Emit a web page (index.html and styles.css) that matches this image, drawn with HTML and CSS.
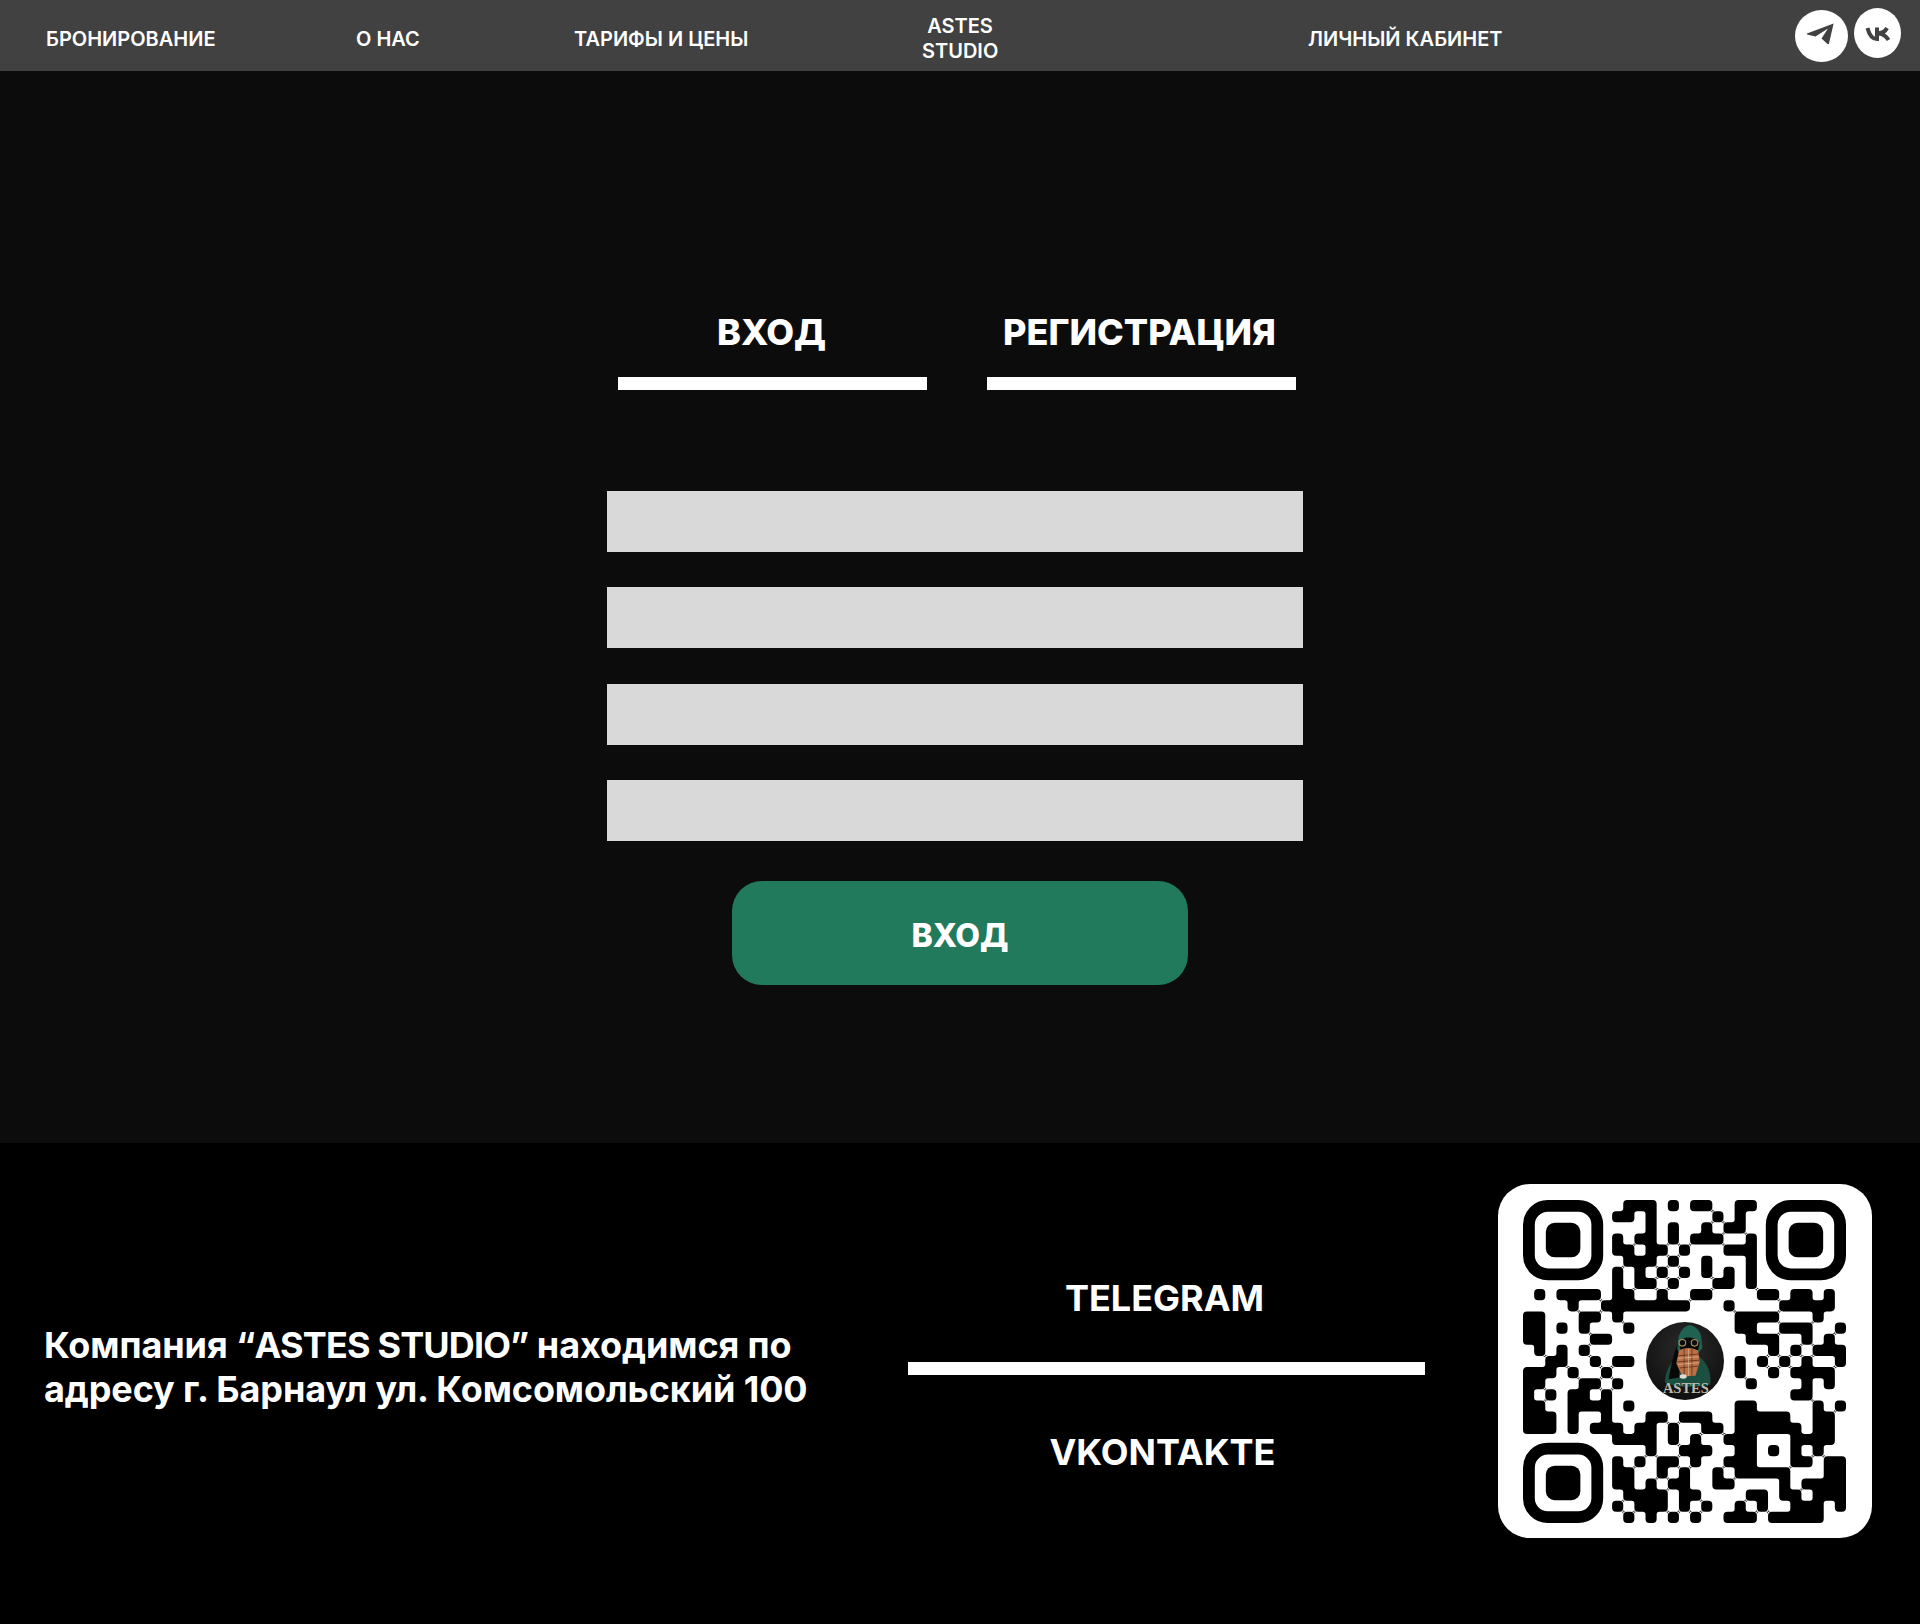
FILE: index.html
```html
<!DOCTYPE html>
<html lang="ru">
<head>
  <meta charset="UTF-8">
  <meta name="viewport" content="width=device-width, initial-scale=1.0">
  <title>ASTES STUDIO</title>
  <link rel="stylesheet" href="styles.css">
</head>
<body>
  <header class="top-bar">
    <a class="nav-link" href="#">БРОНИРОВАНИЕ</a>
    <a class="nav-link" href="#">О НАС</a>
    <a class="nav-link" href="#">ТАРИФЫ И ЦЕНЫ</a>
    <a class="nav-link nav-brand" href="#">ASTES STUDIO</a>
    <a class="nav-link" href="#">ЛИЧНЫЙ КАБИНЕТ</a>
    <div class="socials">
      <a class="social social-tg" href="#" aria-label="Telegram">
        <svg viewBox="0 0 53 52" width="53" height="52">
          <path class="icon-fill" d="M12 23.5 38.6 13.4 34 33.6c-.2.8-.9 1-1.5.5L26.5 28.5 33 18.6 20.5 26.6 13 24.8c-1.2-.3-1.2-.9-1-1.3z"/>
        </svg>
      </a>
      <a class="social social-vk" href="#" aria-label="VK">
        <svg viewBox="0 0 47 50" width="47" height="50">
          <path class="icon-line" d="M13.5 20C15 26 18 31 23 31V19.5M23 25.5C27 25.5 31 24 33 20M25 25.5C29 26 32 28 34.5 32"/>
        </svg>
      </a>
    </div>
  </header>

  <main class="auth">
    <div class="tabs">
      <a class="tab tab-login" href="#">ВХОД</a>
      <a class="tab tab-signup" href="#">РЕГИСТРАЦИЯ</a>
    </div>
    <form class="auth-form">
      <input class="field" type="text">
      <input class="field" type="text">
      <input class="field" type="password">
      <input class="field" type="password">
      <button class="submit" type="submit">ВХОД</button>
    </form>
  </main>

  <footer class="site-footer">
    <p class="address">Компания <span class="address-name">“ASTES STUDIO”</span> находимся по<br>адресу г. Барнаул ул. Комсомольский 100</p>
    <div class="contacts">
      <a class="contact-link" href="#">TELEGRAM</a>
      <div class="contact-line"></div>
      <a class="contact-link contact-vk" href="#">VKONTAKTE</a>
    </div>
    <div class="qr-card">
      <svg id="qr" class="qr-code" viewBox="0 0 29 29" width="323" height="323"></svg>
      <svg class="qr-logo" viewBox="0 0 90 90" width="78" height="78">
        <defs>
          <radialGradient id="logoBg" cx="50%" cy="35%" r="65%">
            <stop offset="0" stop-color="#2a2a2a"/>
            <stop offset="1" stop-color="#101010"/>
          </radialGradient>
        </defs>
        <circle cx="45" cy="45" r="45" fill="url(#logoBg)"/>
        <path fill="#1b4f42" d="M22 70C22 58 27 47 36 40L62 40C70 47 76 58 74 72 58 76 36 76 22 70z"/>
        <path fill="#080808" d="M37 24C31 38 29 52 26 66L38 64 41 30z"/>
        <path fill="#1f6251" d="M51 3.5C43 5 38 12 37 21L36 32 40 36 60 36 65 30 64 19C63 11 58 5 51 3.5z"/>
        <path fill="#090909" d="M38 24C42 16 56 16 62 24L60 33 40 33z"/>
        <circle cx="42" cy="24" r="3.8" fill="#0d0d0d" stroke="#a8925f" stroke-width="1.3"/>
        <circle cx="56" cy="24" r="3.8" fill="#0d0d0d" stroke="#a8925f" stroke-width="1.3"/>
        <path fill="#bb7046" d="M38 33C44 29 54 29 60 33L62 46 57 62 42 63 35 48z"/>
        <path fill="none" stroke="#6f3a20" stroke-width="1.1" d="M37 39 61 37M36 46 62 44M39 53 60 51M44 31 44 62M53 31 53 62"/>
        <path fill="none" stroke="#e3d3b6" stroke-width=".6" d="M37 42 61 40M37 49 61 47M49 31 49 62"/>
        <ellipse cx="43" cy="63" rx="4" ry="2.6" fill="#e0dad0"/>
        <text class="logo-text" x="46" y="82" textLength="53" lengthAdjust="spacingAndGlyphs">ASTES</text>
      </svg>
    </div>
  </footer>

  <script src="qr.js"></script>
</body>
</html>
```

FILE: styles.css
```css
* {
  margin: 0;
  padding: 0;
  box-sizing: border-box;
  font-family: 'Inter', 'Liberation Sans', sans-serif;
}

body {
  width: 1920px;
  min-height: 1624px;
  background-color: #000;
  color: #fff;
}

a {
  color: #fff;
  text-decoration: none;
}

/* Top bar */
.top-bar {
  height: 71px;
  padding-left: 46px;
  background-color: #414141;
  display: grid;
  grid-template-columns: 310px 218px 348px 386px 487px 106px;
  align-items: center;
}

.nav-link {
  padding-top: 7px;
  font-size: 20px;
  font-weight: 600;
  line-height: 25px;
}

.nav-brand {
  width: 76px;
  text-align: center;
}

.socials {
  display: flex;
  align-items: center;
  gap: 6px;
}

.social {
  display: block;
  background-color: #fff;
  border-radius: 50%;
  line-height: 0;
}

.social-tg {
  width: 53px;
  height: 52px;
}

.social-vk {
  width: 47px;
  height: 50px;
  margin-top: -6px;
}

.icon-fill {
  fill: #414141;
}

.icon-line {
  fill: none;
  stroke: #414141;
  stroke-width: 4;
}

/* Login / sign up */
.auth {
  height: 1072px;
  padding: 235px 0 0 607px;
  background-color: #0c0c0c;
}

.tabs {
  display: flex;
  gap: 60px;
  margin-left: 11px;
}

.tab {
  width: 309px;
  height: 84px;
  padding-top: 4px;
  border-bottom: 13px solid #fff;
  font-size: 36px;
  font-weight: 800;
  line-height: 44px;
  text-align: center;
}

.tab-login {
  padding-right: 2px;
}

.tab-signup {
  padding-right: 4px;
}

.auth-form {
  width: 696px;
  margin-top: 101px;
  display: flex;
  flex-direction: column;
  gap: 35.33px;
}

.field {
  width: 100%;
  height: 61px;
  border: none;
  background-color: #d9d9d9;
}

.submit {
  width: 456px;
  height: 104px;
  margin: 5px 0 0 125px;
  padding-top: 4px;
  border: none;
  border-radius: 30px;
  background-color: #207a5b;
  color: #fff;
  font-size: 32px;
  font-weight: 800;
}

/* Footer */
.site-footer {
  height: 481px;
  padding-left: 44px;
  background-color: #000;
  display: flex;
  align-items: flex-start;
}

.address {
  width: 800px;
  margin-top: 180px;
  font-size: 36px;
  font-weight: 700;
  line-height: 44px;
  letter-spacing: -0.1px;
}

.address-name {
  letter-spacing: -0.85px;
}

.contacts {
  width: 517px;
  margin: 133px 0 0 64px;
  display: flex;
  flex-direction: column;
  text-align: center;
}

.contact-link {
  margin-right: 4px;
  font-size: 36px;
  font-weight: 700;
  line-height: 44px;
}

.contact-vk {
  margin-right: 8px;
}

.contact-line {
  height: 13px;
  margin: 42px 0 55px;
  background-color: #fff;
}

.qr-card {
  position: relative;
  width: 374px;
  height: 354px;
  margin: 41px 0 0 73px;
  padding: 16px 0 0 25px;
  background-color: #fff;
  border-radius: 32px;
}

.qr-code {
  display: block;
  overflow: visible;
}

.qr-logo {
  position: absolute;
  left: 148px;
  top: 138px;
}

.logo-text {
  font-family: 'Liberation Serif', serif;
  font-size: 18px;
  font-weight: 700;
  text-anchor: middle;
  fill: #bdb9ac;
}
```

FILE: qr.js
```js
// QR modules, '#' is dark. The three finder squares are drawn on their own.
const rows = [
  '.........###.#.##..##........',
  '........##.#.....#.#.........',
  '...........#.#..#.##.........',
  '........#.##.#.###..#........',
  '........##.##.#...###........',
  '.........###.#..#...#........',
  '........#.#.#.#.#.#.#........',
  '........#.##.#...##.#........',
  '.#.####.##..#..##....##.##.#.',
  '....#..########...#....#####.',
  '##...##.#..........####...#..',
  '##.#.#...#.........##..###..#',
  '##....##............###..#.#.',
  '.#.#.#................#.#.###',
  '..##..#.##.........#.#.#.#..#',
  '###.#..#...........#..#.####.',
  '##...##.#...........#....#.#.',
  '#.#.##.#................##...',
  '##..####.#.........##.....#.#',
  '###.#..#...##.###..#####..##.',
  '###.#.###.##.#..##.######.##.',
  '........####.#.#..###...####.',
  '...........#..###..##.#.#.#..',
  '........#.#.##.#..###...##.##',
  '........##..#.#..#.#####...##',
  '........##.#.##..##....#.####',
  '.........####.##....##.##.###',
  '........#.###.#.#..#.#..###.#',
  '.........#.#.#.#..###.#####..'
];

const R = 0.36;
const dark = (r, c) => rows[r] !== undefined && rows[r][c] === '#';

// one module, a corner is rounded only when both sides next to it are empty
function cellPath(r, c) {
  const up = dark(r - 1, c), down = dark(r + 1, c);
  const left = dark(r, c - 1), right = dark(r, c + 1);
  let d = '';
  d += !up && !left ? `M${c} ${r + R}A${R} ${R} 0 0 1 ${c + R} ${r}` : `M${c} ${r}`;
  d += !up && !right ? `L${c + 1 - R} ${r}A${R} ${R} 0 0 1 ${c + 1} ${r + R}` : `L${c + 1} ${r}`;
  d += !down && !right ? `L${c + 1} ${r + 1 - R}A${R} ${R} 0 0 1 ${c + 1 - R} ${r + 1}` : `L${c + 1} ${r + 1}`;
  d += !down && !left ? `L${c + R} ${r + 1}A${R} ${R} 0 0 1 ${c} ${r + 1 - R}` : `L${c} ${r + 1}`;
  return d + 'Z';
}

// small fillet in the inner corner where two dark modules meet
function filletPath(r, c) {
  let d = '';
  [[-1, -1], [-1, 1], [1, -1], [1, 1]].forEach(([dr, dc]) => {
    if (dark(r + dr, c) && dark(r, c + dc)) {
      const x = dc < 0 ? c : c + 1;
      const y = dr < 0 ? r : r + 1;
      const sweep = dr * dc > 0 ? 0 : 1;
      d += `M${x} ${y}L${x - dc * 0.25} ${y}A.25 .25 0 0 ${sweep} ${x} ${y - dr * 0.25}Z`;
    }
  });
  return d;
}

let modules = '';
rows.forEach((row, r) => {
  [...row].forEach((cell, c) => {
    modules += cell === '#' ? cellPath(r, c) : filletPath(r, c);
  });
});

// finders come out a little over seven modules wide
function finder(x, y) {
  return `<rect x="${x + 0.53}" y="${y + 0.53}" width="6.14" height="6.14" rx="1.7" fill="none" stroke="#000" stroke-width="1.06"/>` +
    `<rect x="${x + 2.05}" y="${y + 2.05}" width="3.1" height="3.1" rx=".8"/>`;
}

document.getElementById('qr').innerHTML =
  `<path d="${modules}"/>` + finder(0, 0) + finder(21.8, 0) + finder(0, 21.8);
```
